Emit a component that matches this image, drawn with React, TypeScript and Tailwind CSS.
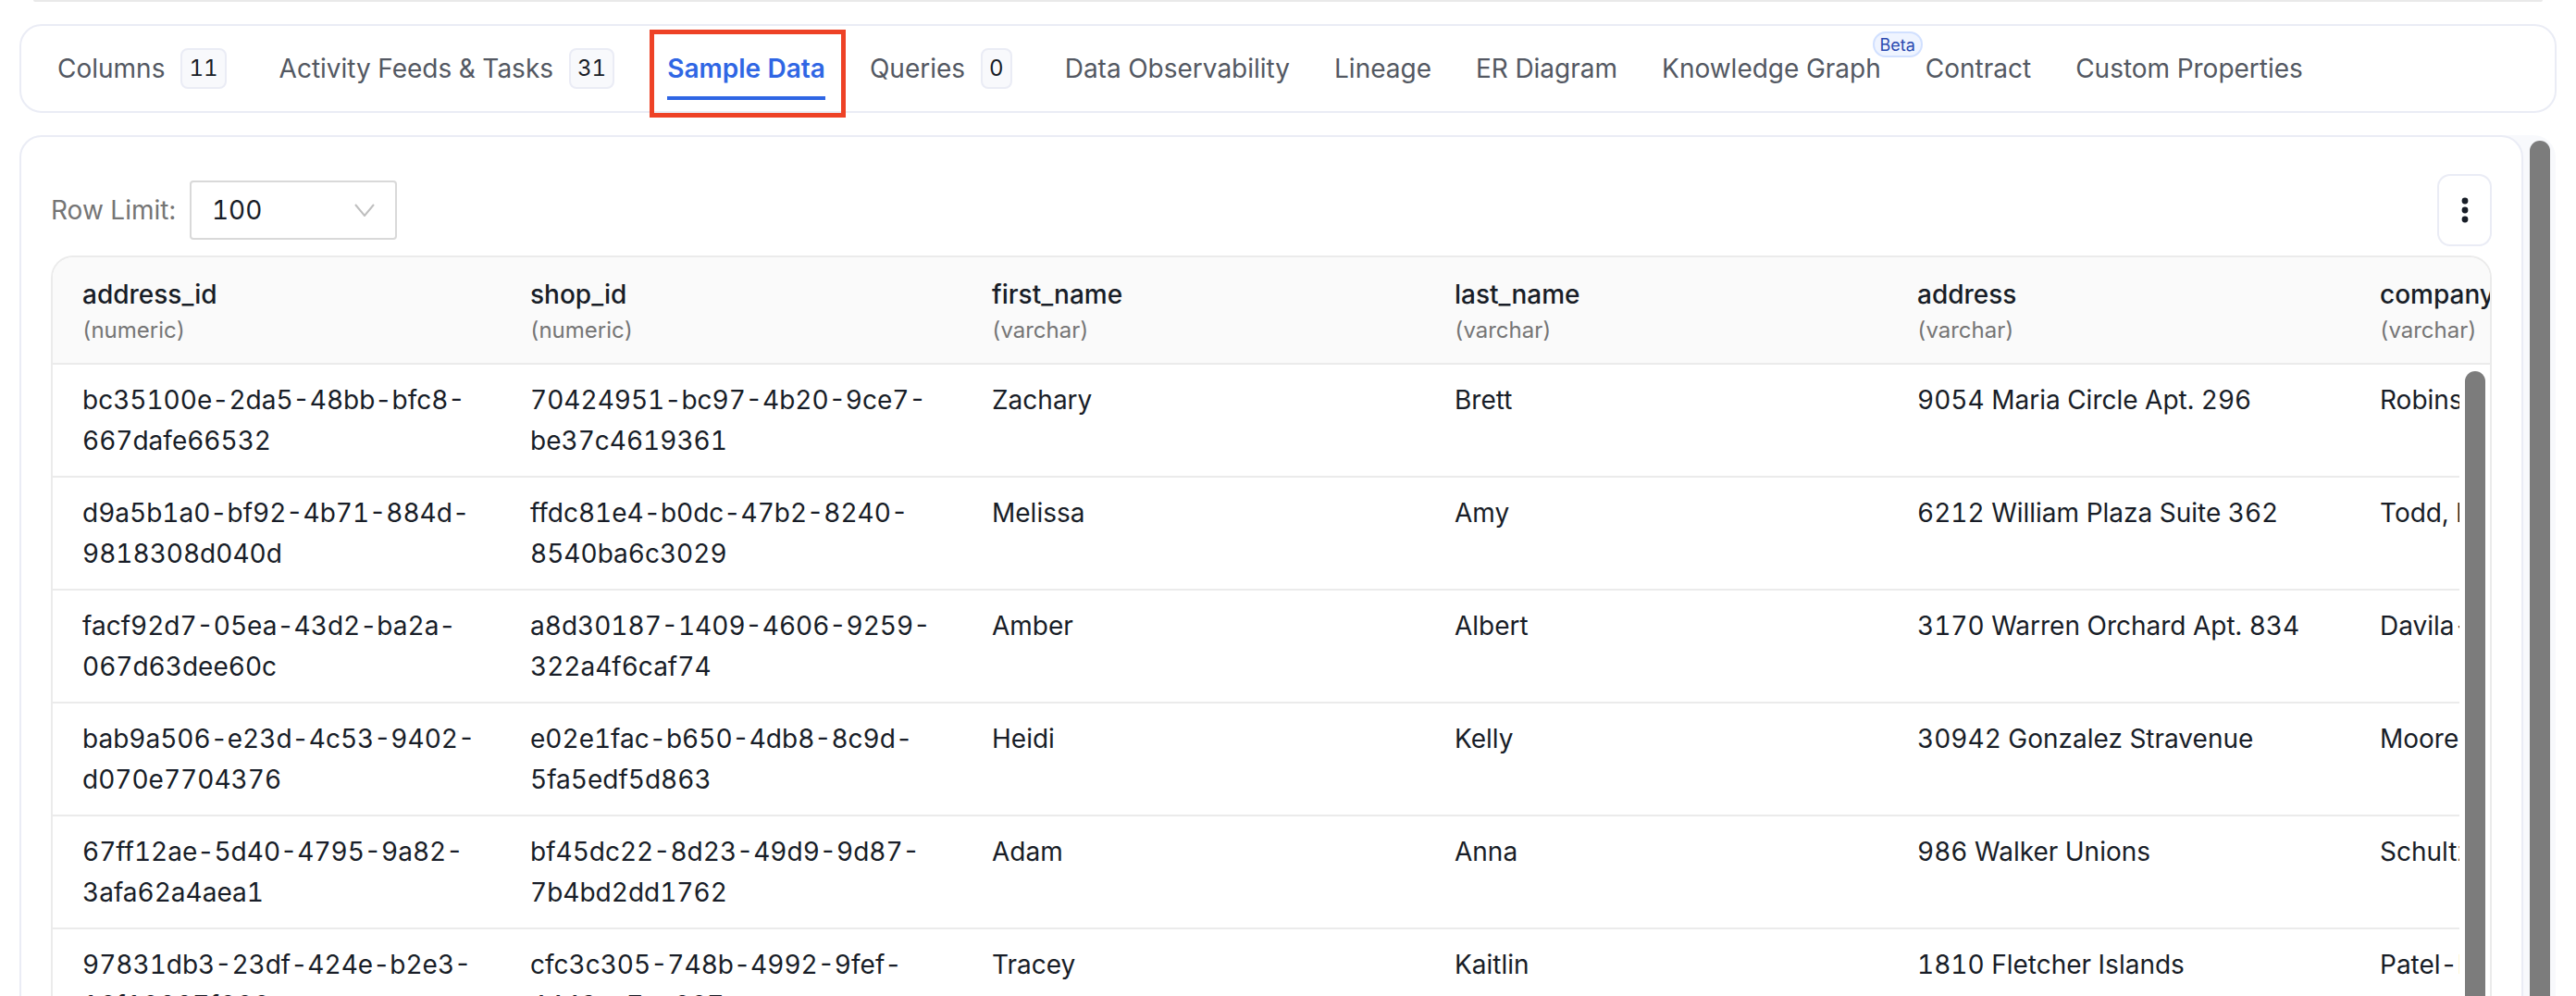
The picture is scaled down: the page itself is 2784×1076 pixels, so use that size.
import React from "react"

const columns = [
  { name: "address_id", type: "(numeric)" },
  { name: "shop_id", type: "(numeric)" },
  { name: "first_name", type: "(varchar)" },
  { name: "last_name", type: "(varchar)" },
  { name: "address", type: "(varchar)" },
  { name: "company", type: "(varchar)" },
]

const rows = [
  ["bc35100e-2da5-48bb-bfc8-\n667dafe66532", "70424951-bc97-4b20-9ce7-\nbe37c4619361", "Zachary", "Brett", "9054 Maria Circle Apt. 296", "Robinson LLC"],
  ["d9a5b1a0-bf92-4b71-884d-\n9818308d040d", "ffdc81e4-b0dc-47b2-8240-\n8540ba6c3029", "Melissa", "Amy", "6212 William Plaza Suite 362", "Todd, Hill and Ward"],
  ["facf92d7-05ea-43d2-ba2a-\n067d63dee60c", "a8d30187-1409-4606-9259-\n322a4f6caf74", "Amber", "Albert", "3170 Warren Orchard Apt. 834", "Davila-Smith"],
  ["bab9a506-e23d-4c53-9402-\nd070e7704376", "e02e1fac-b650-4db8-8c9d-\n5fa5edf5d863", "Heidi", "Kelly", "30942 Gonzalez Stravenue", "Moore Group"],
  ["67ff12ae-5d40-4795-9a82-\n3afa62a4aea1", "bf45dc22-8d23-49d9-9d87-\n7b4bd2dd1762", "Adam", "Anna", "986 Walker Unions", "Schultz Inc"],
  ["97831db3-23df-424e-b2e3-\n16f10887f666", "cfc3c305-748b-4992-9fef-\n4443ac7ea667", "Tracey", "Kaitlin", "1810 Fletcher Islands", "Patel-Ross"],
]

const gridCols = "grid grid-cols-[484px_499px_500px_500px_500px_501px] w-[2984px]"

function CountBadge({ value }: { value: number }) {
  return (
    <span className="flex h-[44px] items-center justify-center rounded-[8px] border-2 border-[#eaecf5] bg-[#f8f9fc] px-[7px] text-[24px] text-[#181d27]">
      {value}
    </span>
  )
}

function Tab({ label, count }: { label: string; count?: number }) {
  if (count === undefined) return <span className="whitespace-nowrap">{label}</span>
  return (
    <div className="mr-[9px] flex items-center gap-[17px]">
      <span className="whitespace-nowrap">{label}</span>
      <CountBadge value={count} />
    </div>
  )
}

export default function App() {
  return (
    <div className="h-[1076px] w-[2784px] overflow-hidden bg-white font-[Inter,sans-serif] tabular-nums">
      <div className="mx-[36px] h-[2px] rounded-b-[4px] bg-[#e9e9e9]" />

      {/* tabs */}
      <div className="mx-[21px] mt-[24px] flex h-[96px] items-center gap-[48px] rounded-[24px] border-2 border-[#eaecf5] pl-[39px] text-[28px] text-[#535862]">
        <Tab label="Columns" count={11} />
        <Tab label="Activity Feeds & Tasks" count={31} />
        <div className="relative whitespace-nowrap font-semibold text-[#2f66e4]">
          Sample Data
          <div className="absolute inset-x-0 top-[51px] h-[4px] bg-[#2f66e4]" />
          <div className="absolute -bottom-[32px] -left-[19px] -right-[22px] -top-[21px] border-[5px] border-[#ee4226]" />
        </div>
        <Tab label="Queries" count={0} />
        <Tab label="Data Observability" />
        <Tab label="Lineage" />
        <Tab label="ER Diagram" />
        <div className="relative">
          <Tab label="Knowledge Graph" />
          <span className="absolute -right-[45px] -top-[19px] flex h-[28px] w-[54px] items-center justify-center rounded-full border-2 border-[#d1e0ff] bg-[#eff4ff] text-[18px] text-[#2a4ab0]">
            Beta
          </span>
        </div>
        <Tab label="Contract" />
        <Tab label="Custom Properties" />
      </div>

      {/* sample data */}
      <div className="ml-[21px] mr-[22px] mt-[24px] flex h-[960px] rounded-[24px] bg-[#f8f9fc]">
        <div className="min-w-0 flex-1 rounded-[24px] border-2 border-[#eaecf5] bg-white px-[32px] pt-[40px]">
          <div className="flex h-[78px] items-center justify-between">
            <div className="flex items-center gap-[15px]">
              <span className="text-[28px] text-[#757575]">Row Limit:</span>
              <div className="flex h-[64px] w-[224px] items-center justify-between rounded-[4px] border-2 border-[#d9d9d9] pl-[22px] pr-[22px] text-[28px] text-[#181d27]">
                100
                <svg width="22" height="14" viewBox="0 0 22 14" fill="none" stroke="#bfbfbf" strokeWidth="2">
                  <path d="M1 1l10 12L21 1" />
                </svg>
              </div>
            </div>
            <button className="flex h-[78px] w-[59px] items-center justify-center rounded-[14px] border-2 border-[#eaecf5] bg-white">
              <svg width="8" height="28" viewBox="0 0 8 28" fill="#181d27">
                <circle cx="4" cy="4" r="3.4" />
                <circle cx="4" cy="14" r="3.4" />
                <circle cx="4" cy="24" r="3.4" />
              </svg>
            </button>
          </div>

          <div className="mt-[10px] h-[900px] overflow-hidden rounded-t-[24px] border-2 border-b-0 border-[#ebebeb] text-[28px] leading-[44px] text-[#181d27]">
            <div className="h-[116px] overflow-hidden border-b-2 border-[#ebebeb] bg-[#fafafa]">
              <div className={gridCols}>
                {columns.map((col) => (
                  <div key={col.name} className="px-[32px] pt-[18px]">
                    <div className="font-medium">{col.name}</div>
                    <div className="text-[24px] leading-[34px] text-[#757575]">{col.type}</div>
                  </div>
                ))}
              </div>
            </div>

            <div className="flex">
              <div className="w-[2601px] shrink-0">
                {rows.map((row) => (
                  <div key={row[0]} className="h-[122px] overflow-hidden border-b-2 border-[#ebebeb]">
                    <div className={gridCols}>
                      {row.map((cell, i) => (
                        <div key={i} className="whitespace-pre px-[32px] py-[16px]">
                          {cell}
                        </div>
                      ))}
                    </div>
                  </div>
                ))}
              </div>
              <div className="flex-1 pl-[6px] pt-[7px]">
                <div className="h-[800px] w-[22px] rounded-full bg-[#7c7c7c]" />
              </div>
            </div>
          </div>
        </div>

        <div className="w-[35px] shrink-0 pl-[7px] pt-[6px]">
          <div className="h-[940px] w-[22px] rounded-t-full bg-[#7c7c7c]" />
        </div>
      </div>
    </div>
  )
}
